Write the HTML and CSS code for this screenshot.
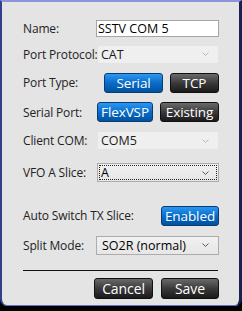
FILE: index.html
```html
<!DOCTYPE html>
<html>
<head>
<meta charset="utf-8">
<link rel="stylesheet" href="styles.css">
</head>
<body>
<div class="window">
  <div class="form">
    <div class="row r-name">
      <span class="label">Name:</span>
      <div class="ctrl"><div class="textbox">SSTV COM 5</div></div>
    </div>
    <div class="row r-proto">
      <span class="label">Port Protocol:</span>
      <div class="ctrl"><div class="select disabled"><span>CAT</span><svg class="chev" width="7" height="4" viewBox="0 0 7 4"><path d="M0.5 0.5 L3.5 3.5 L6.5 0.5" fill="none" stroke="currentColor" stroke-width="1"/></svg></div></div>
    </div>
    <div class="row r-type">
      <span class="label">Port Type:</span>
      <div class="ctrl btns">
        <div class="btn blue w-serial">Serial</div>
        <div class="btn dark w-tcp">TCP</div>
      </div>
    </div>
    <div class="row r-serial">
      <span class="label">Serial Port:</span>
      <div class="ctrl btns">
        <div class="btn blue w-flex">FlexVSP</div>
        <div class="btn dark w-exist">Existing</div>
      </div>
    </div>
    <div class="row r-client">
      <span class="label">Client COM:</span>
      <div class="ctrl"><div class="select disabled"><span>COM5</span><svg class="chev" width="7" height="4" viewBox="0 0 7 4"><path d="M0.5 0.5 L3.5 3.5 L6.5 0.5" fill="none" stroke="currentColor" stroke-width="1"/></svg></div></div>
    </div>
    <div class="row r-vfo">
      <span class="label">VFO A Slice:</span>
      <div class="ctrl"><div class="select active focus"><span>A</span><svg class="chev" width="7" height="4" viewBox="0 0 7 4"><path d="M0.5 0.5 L3.5 3.5 L6.5 0.5" fill="none" stroke="currentColor" stroke-width="1"/></svg></div></div>
    </div>
    <div class="row r-auto">
      <span class="label">Auto Switch TX Slice:</span>
      <div class="ctrl btns">
        <div class="btn blue w-enabled">Enabled</div>
      </div>
    </div>
    <div class="row r-split">
      <span class="label">Split Mode:</span>
      <div class="ctrl btns"><div class="select active w-split"><span>SO2R (normal)</span><svg class="chev" width="7" height="4" viewBox="0 0 7 4"><path d="M0.5 0.5 L3.5 3.5 L6.5 0.5" fill="none" stroke="currentColor" stroke-width="1"/></svg></div></div>
    </div>
    <div class="divider"></div>
    <div class="row r-actions">
      <div class="ctrl btns">
        <div class="btn dark w-cancel">Cancel</div>
        <div class="btn dark w-save">Save</div>
      </div>
    </div>
  </div>
</div>
</body>
</html>
```
FILE: styles.css
```css
html, body {
  margin: 0;
  padding: 0;
  background: #000;
  width: 242px;
  height: 311px;
  overflow: hidden;
}
.window {
  box-sizing: border-box;
  width: 242px;
  height: 306px;
  background: #e4e4e4;
  border-top: 2px solid #8c95d9;
  border-left: 2px solid #33408e;
  border-right: 3px solid #1a2050;
  border-bottom: 1px solid #6470c8;
  border-radius: 0 0 7px 7px;
  font-family: "Open Sans", "Noto Sans", sans-serif;
  font-size: 12px;
  color: #1b1b1b;
}
.form {
  display: flex;
  flex-direction: column;
  padding: 18px 20px 0 21px;
}
.row {
  display: flex;
  align-items: center;
}
.label {
  flex: none;
  width: 73px;
  white-space: nowrap;
  letter-spacing: -0.15px;
  color: #222;
}
.ctrl {
  flex: 1;
  display: flex;
  min-width: 0;
}
.btns {
  justify-content: flex-end;
  gap: 7px;
}
.r-name { height: 17px; }
.r-proto { height: 20px; margin-top: 7px; }
.r-type { height: 25px; margin-top: 6px; }
.r-serial { height: 24px; margin-top: 5px; }
.r-client { height: 21px; margin-top: 6px; }
.r-vfo { height: 21px; margin-top: 11px; }
.r-auto { height: 25px; margin-top: 20px; }
.r-split { height: 20px; margin-top: 7px; }
.r-actions { height: 25px; margin-top: 5px; }
.r-actions .btns { gap: 8px; }

.textbox {
  box-sizing: border-box;
  width: 123px;
  height: 17px;
  background: #fff;
  border: 1px solid #a5a5a5;
  padding-left: 1px;
  line-height: 15px;
  font-size: 12.5px;
  color: #000;
}
.select {
  box-sizing: border-box;
  width: 122px;
  height: 100%;
  margin-left: 1px;
  display: flex;
  align-items: center;
  justify-content: space-between;
  padding: 0 9px 0 3px;
  font-size: 12.5px;
}
.select.disabled {
  background: #efefef;
  border: 1px solid #e3e3e3;
  color: #1b1b1b;
}
.select.disabled .chev { color: #b8b8b8; }
.select.active {
  background: linear-gradient(#f1f1f1, #e6e6e6);
  border: 1px solid #acacac;
  color: #000;
}
.select.active .chev { color: #555; }
.select.focus {
  outline: 1px dotted #222;
  outline-offset: -3px;
}
.select.w-split { width: 125px; margin-left: 0; padding-left: 5px; }

.btn {
  box-sizing: border-box;
  height: 100%;
  display: flex;
  align-items: center;
  justify-content: center;
  color: #fff;
  font-size: 13.5px;
  letter-spacing: -0.1px;
  border-radius: 3px;
}
.btn.blue {
  background: linear-gradient(#2a98f2, #0a6cc8 50%, #0052a0);
  border: 1px solid #0b3c70;
}
.btn.dark {
  background: linear-gradient(#6a6a6a, #3a3a3a 50%, #1a1a1a);
  border: 1px solid #111;
}
.w-serial { width: 59px; }
.w-tcp { width: 49px; }
.w-flex { width: 56px; }
.w-exist { width: 59px; }
.w-enabled { width: 58px; }
.w-cancel { width: 59px; }
.w-save { width: 58px; }
.r-actions .btn { font-size: 14px; }

.divider {
  height: 1px;
  background: #111;
  margin-top: 15px;
  margin-right: 1px;
}
```
